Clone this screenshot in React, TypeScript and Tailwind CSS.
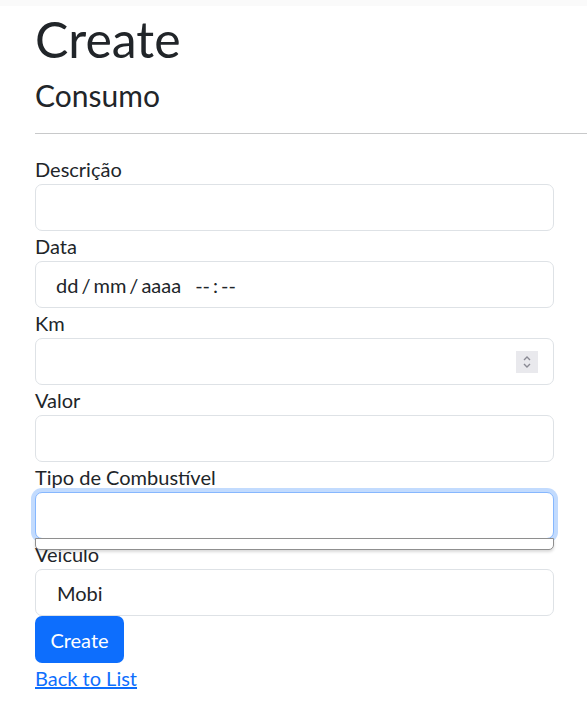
import React from "react";

const font = { fontFamily: "Lato, 'Noto Sans', sans-serif" };

function Label({ children }: { children: React.ReactNode }) {
  return <div className="text-[20px] leading-[30px] text-[#212529]">{children}</div>;
}

function Box({ children, focus }: { children?: React.ReactNode; focus?: boolean }) {
  return (
    <div
      className={
        "relative flex h-[47px] w-[519px] items-center rounded-[7px] border bg-white text-[20px] text-[#212529] " +
        (focus ? "border-[#86b7fe] shadow-[0_0_0_4px_rgba(13,110,253,0.25)]" : "border-[#dee2e6]")
      }
    >
      {children}
    </div>
  );
}

export default function App() {
  return (
    <div className="min-h-[705px] w-[587px] overflow-hidden bg-white text-[#212529]" style={font}>
      <div className="h-[6px] bg-[#fafafa]" />
      <div className="pl-[35px]">
        <h1 className="mt-[3px] text-[50px] font-normal leading-[61px]">Create</h1>
        <h4 className="mt-[8px] text-[30px] font-normal leading-[35px]">Consumo</h4>
      </div>
      <div className="ml-[35px] mt-[20px] h-px bg-[#c8c9ca]" />
      <div className="relative mt-[20px] pl-[35px]">
        <Label>Descrição</Label>
        <Box />
        <Label>Data</Label>
        <Box>
          <span className="flex pl-[20px] whitespace-pre">
            <span>dd</span>
            <span className="mx-[3px]">/</span>
            <span>mm</span>
            <span className="mx-[3px]">/</span>
            <span>aaaa</span>
            <span className="ml-[14px]">--</span>
            <span className="mx-[3px]">:</span>
            <span>--</span>
          </span>
        </Box>
        <Label>Km</Label>
        <Box>
          <div className="absolute right-[15px] top-[12px] flex h-[22px] w-[22px] flex-col items-center justify-center bg-[#e9e9ed]">
            <svg width="10" height="16" viewBox="0 0 10 16" fill="none" stroke="#8a8a94" strokeWidth="1.4">
              <path d="M2 6 L5 3 L8 6" />
              <path d="M2 10 L5 13 L8 10" />
            </svg>
          </div>
        </Box>
        <Label>Valor</Label>
        <Box />
        <Label>Tipo de Combustível</Label>
        <Box focus />
        <div className="relative">
          <div className="absolute left-0 top-[-1px] z-10 h-[12px] w-[519px] rounded-b-[5px] border border-[#8f8f8f] bg-white shadow-[0_2px_3px_rgba(0,0,0,0.15)]" />
          <Label>Veiculo</Label>
        </div>
        <Box>
          <span className="pl-[21px]">Mobi</span>
        </Box>
        <button className="flex h-[47px] w-[89px] items-center justify-center rounded-[7px] bg-[#0d6efd] text-[20px] text-white">
          Create
        </button>
        <a href="#" className="block w-fit text-[20px] leading-[30px] text-[#0d6efd] underline">
          Back to List
        </a>
      </div>
    </div>
  );
}
